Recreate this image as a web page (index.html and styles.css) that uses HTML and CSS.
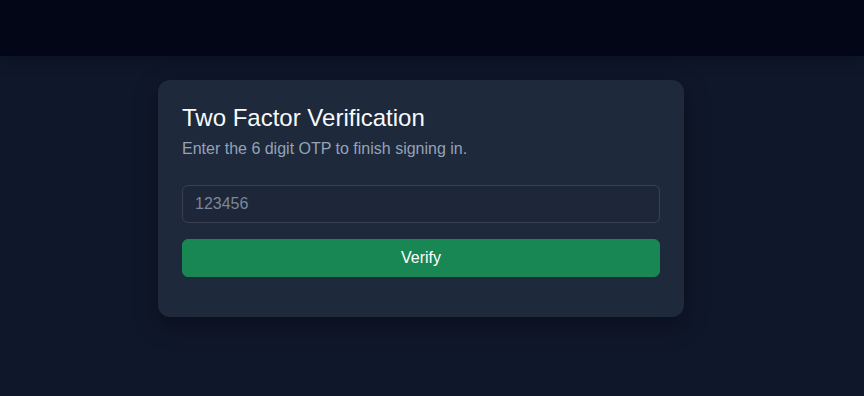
FILE: index.html
```html
<!DOCTYPE html>
<html lang="en">
<head>
<meta charset="utf-8">
<title>Two Factor Verification</title>
<link rel="stylesheet" href="styles.css">
</head>
<body>
<header class="topbar"></header>
<main class="page">
  <section class="card">
    <h1 class="title">Two Factor Verification</h1>
    <p class="subtitle">Enter the 6 digit OTP to finish signing in.</p>
    <form class="form">
      <input class="otp" type="text" placeholder="123456" maxlength="6">
      <button class="verify" type="button">Verify</button>
    </form>
  </section>
</main>
</body>
</html>
```
FILE: styles.css
```css
* { box-sizing: border-box; }
html, body { margin: 0; padding: 0; }
body {
  background: #0f172a;
  font-family: "Liberation Sans", Arial, sans-serif;
  color: #f1f5f9;
  height: 396px;
  overflow: hidden;
}
.topbar {
  height: 56px;
  background: #020617;
  box-shadow: 0 2px 16px rgba(0,0,0,0.35);
  position: relative;
}
.page {
  padding: 24px 0 0 158px;
}
.card {
  width: 526px;
  background: #1e293b;
  border-radius: 12px;
  padding: 24px 24px 24px 24px;
  box-shadow: 0 8px 24px rgba(0,0,0,0.35);
}
.title {
  margin: 0 0 4px;
  font-size: 24px;
  font-weight: 400;
  line-height: 28.8px;
  color: #f8fafc;
}
.subtitle {
  margin: 0 0 24px;
  font-size: 16px;
  line-height: 24px;
  color: #94a3b8;
}
.form {
  display: flex;
  flex-direction: column;
  gap: 16px;
  margin: 0 0 16px;
}
.otp {
  height: 38px;
  width: 100%;
  background: #1e2739;
  border: 1px solid #374151;
  border-radius: 6px;
  padding: 6px 12px;
  font-family: inherit;
  font-size: 16px;
  color: #e2e8f0;
  outline: none;
}
.otp::placeholder { color: #7b8698; }
.verify {
  height: 38px;
  width: 100%;
  background: #198754;
  border: 1px solid #198754;
  border-radius: 6px;
  color: #ffffff;
  font-family: inherit;
  font-size: 16px;
  cursor: pointer;
}
```
